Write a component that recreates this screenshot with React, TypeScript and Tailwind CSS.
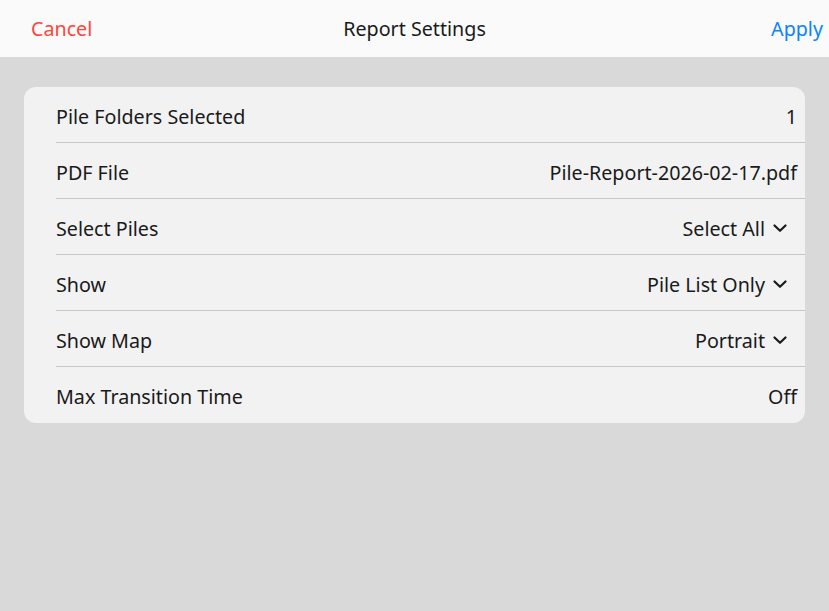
type Row = { label: string; value: string; dropdown?: boolean };

const rows: Row[] = [
  { label: "Pile Folders Selected", value: "1" },
  { label: "PDF File", value: "Pile-Report-2026-02-17.pdf" },
  { label: "Select Piles", value: "Select All", dropdown: true },
  { label: "Show", value: "Pile List Only", dropdown: true },
  { label: "Show Map", value: "Portrait", dropdown: true },
  { label: "Max Transition Time", value: "Off" },
];

const Chevron = () => (
  <svg width="14" height="9" viewBox="0 0 14 9" className="ml-[8px] mr-[10px]" fill="none">
    <path d="M1.5 1.5 L7 6.8 L12.5 1.5" stroke="#1a1a1a" strokeWidth="2.2" strokeLinecap="round" strokeLinejoin="round" />
  </svg>
);

const App = () => {
  return (
    <div
      className="min-h-screen w-full bg-[#d9d9d9] text-[#1a1a1a]"
      style={{ fontFamily: '"Segoe UI", "Noto Sans", sans-serif' }}
    >
      <header className="h-[57px] bg-[#fafafa] flex items-center justify-between pl-[31px] pr-[6px] relative">
        <button className="text-[19.7px] text-[#ff453a]">Cancel</button>
        <h1 className="absolute left-1/2 -translate-x-1/2 text-[19.7px]">Report Settings</h1>
        <button className="text-[19.7px] text-[#0a84ff]">Apply</button>
      </header>

      <div className="px-6 pt-[30px]">
        <div className="bg-[#f2f2f2] rounded-xl overflow-hidden">
          {rows.map((row, i) => (
            <div key={row.label} className="pl-8">
              <div
                className={
                  "h-[56px] pt-1 flex items-center justify-between pr-2 " +
                  (i < rows.length - 1 ? "border-b border-[#c6c6c6]" : "")
                }
              >
                <span className="text-[19.7px]">{row.label}</span>
                <span className="flex items-center text-[19.7px]">
                  {row.value}
                  {row.dropdown && <Chevron />}
                </span>
              </div>
            </div>
          ))}
        </div>
      </div>
    </div>
  );
};

export default App;
